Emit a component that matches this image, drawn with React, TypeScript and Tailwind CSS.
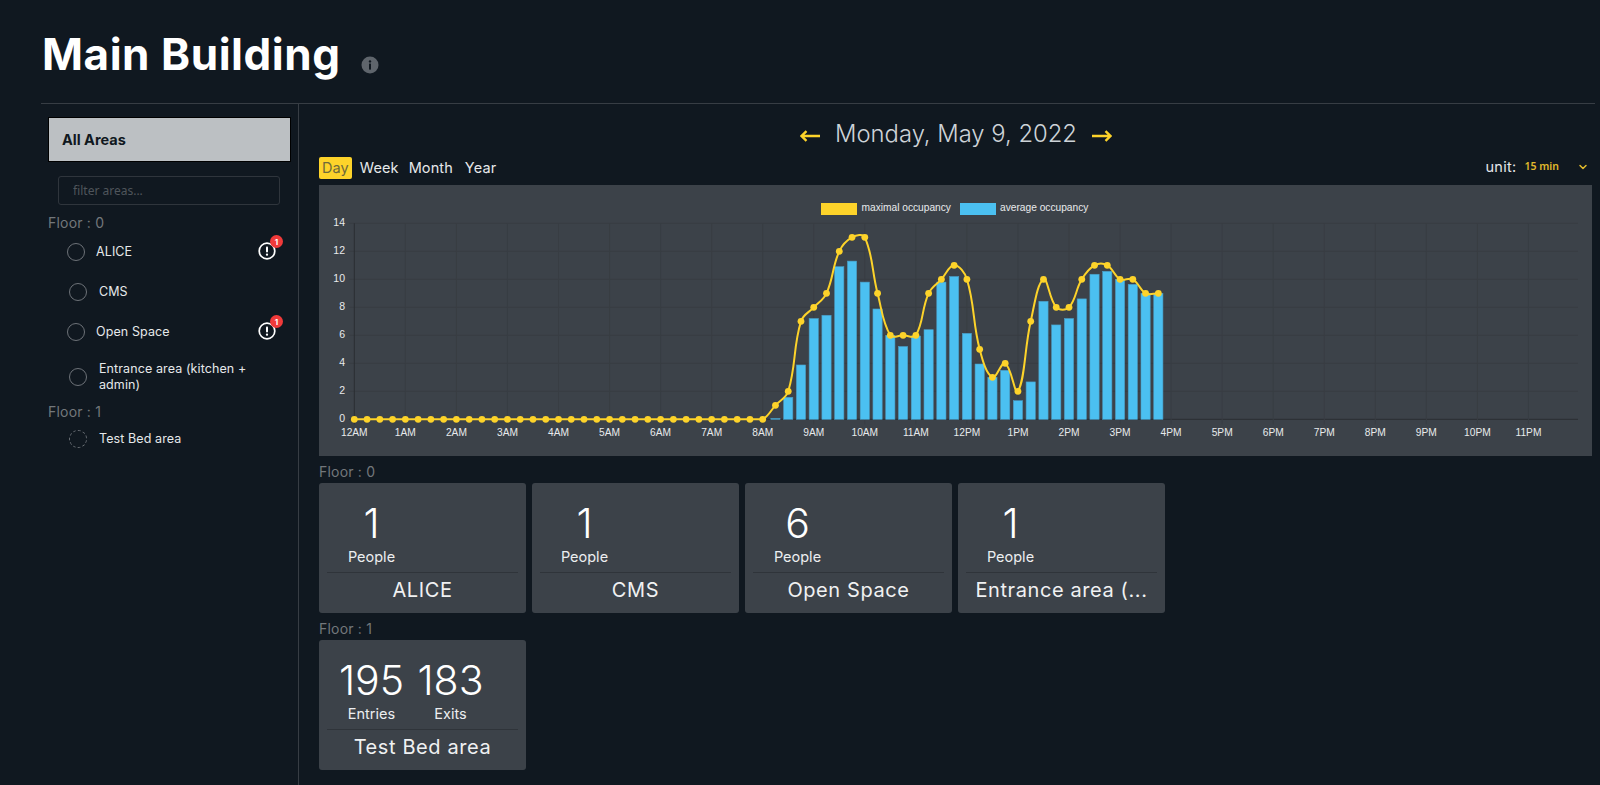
import { ChevronDown } from "lucide-react";

const font = "font-['Inter','Liberation_Sans',sans-serif]";

const maxOccupancy = [
  ...Array(33).fill(0),
  1, 2, 7, 8, 9, 12, 13, 13, 9, 6, 6, 6, 9, 10, 11, 10, 5, 3, 4, 2, 7, 10, 8, 8, 10, 11, 11, 10, 10, 9, 9,
];

const avgOccupancy = [
  ...Array(33).fill(0),
  0.06, 1.57, 3.88, 7.2, 7.43, 10.9, 11.3, 9.8, 7.88, 6, 5.2, 5.95, 6.4, 9.8, 10.2, 6.14, 3.95, 3, 3.5, 1.33, 2.67,
  8.43, 6.74, 7.2, 8.6, 10.36, 10.57, 10, 9.64, 9, 9,
];

const hours = [
  "12AM", "1AM", "2AM", "3AM", "4AM", "5AM", "6AM", "7AM", "8AM", "9AM", "10AM", "11AM",
  "12PM", "1PM", "2PM", "3PM", "4PM", "5PM", "6PM", "7PM", "8PM", "9PM", "10PM", "11PM",
];

// chart coordinates are relative to the chart panel
const x0 = 35.3;
const hourW = 51.05;
const yZero = 234.3;
const unit = 14;
const px = (i: number) => x0 + (i * hourW) / 4;
const py = (v: number) => yZero - v * unit;

function linePath(values: number[]) {
  const pts = values.map((v, i) => ({ x: px(i), y: py(v) }));
  const t = 0.4;
  const cps = pts.map((p, i) => {
    const a = pts[i - 1] ?? p;
    const b = pts[i + 1] ?? p;
    const d1 = Math.hypot(p.x - a.x, p.y - a.y);
    const d2 = Math.hypot(b.x - p.x, b.y - p.y);
    const sum = d1 + d2 || 1;
    return {
      px: p.x - (t * d1 * (b.x - a.x)) / sum,
      py: Math.min(yZero, p.y - (t * d1 * (b.y - a.y)) / sum),
      nx: p.x + (t * d2 * (b.x - a.x)) / sum,
      ny: Math.min(yZero, p.y + (t * d2 * (b.y - a.y)) / sum),
    };
  });
  let d = `M${pts[0].x} ${pts[0].y}`;
  for (let i = 1; i < pts.length; i++) {
    d += ` C${cps[i - 1].nx} ${cps[i - 1].ny} ${cps[i].px} ${cps[i].py} ${pts[i].x} ${pts[i].y}`;
  }
  return d;
}

function OccupancyChart() {
  return (
    <svg width="1273" height="271" className="block" fontFamily="'Liberation Sans', sans-serif">
      {[0, 2, 4, 6, 8, 10, 12, 14].map((v) => (
        <g key={v}>
          <line x1={x0 - 5} x2={1259} y1={py(v)} y2={py(v)} stroke={v === 0 ? "#2a2e33" : "#383d43"} />
          <text x={26} y={py(v) + 3} textAnchor="end" fontSize="10.5" fill="#e8eaec">
            {v}
          </text>
        </g>
      ))}
      {hours.map((label, i) => (
        <g key={label}>
          <line
            x1={x0 + i * hourW}
            x2={x0 + i * hourW}
            y1={py(14)}
            y2={yZero + 5}
            stroke={i === 0 ? "#2a2e33" : "#383d43"}
          />
          <text x={x0 + i * hourW} y={251} textAnchor="middle" fontSize="10.2" fill="#e8eaec">
            {label}
          </text>
        </g>
      ))}
      <rect x="502" y="18" width="36" height="12" fill="#fdd32a" />
      <text x="542.5" y="26" fontSize="10.2" fill="#e8eaec">
        maximal occupancy
      </text>
      <rect x="641" y="18" width="36" height="12" fill="#4bc0f1" />
      <text x="681" y="26" fontSize="10.2" fill="#e8eaec">
        average occupancy
      </text>
      {avgOccupancy.map((v, i) =>
        v > 0 ? (
          <rect
            key={i}
            x={px(i) - 4.6}
            y={py(v)}
            width="9.2"
            height={v * unit}
            fill="#4bc0f1"
            stroke="#4a9cc4"
            strokeWidth="0.6"
          />
        ) : null,
      )}
      <path d={linePath(maxOccupancy)} fill="none" stroke="#fdd32a" strokeWidth="2" />
      {maxOccupancy.map((v, i) => (
        <circle key={i} cx={px(i)} cy={py(v)} r="3.4" fill="#fdd32a" />
      ))}
    </svg>
  );
}

function AlertIcon() {
  return (
    <span className="relative -mt-[2px] block h-[18px] w-[18px]">
      <svg viewBox="0 0 18 18" className="block h-[18px] w-[18px]">
        <circle cx="9" cy="9" r="7.8" fill="none" stroke="#fff" strokeWidth="1.7" />
        <rect x="8" y="4.4" width="2" height="6" rx="0.8" fill="#fff" />
        <circle cx="9" cy="12.7" r="1.15" fill="#fff" />
      </svg>
      <span className="absolute -right-[7px] -top-[7px] flex h-[13px] w-[13px] items-center justify-center rounded-full bg-[#f03a3a] text-[8px] font-bold leading-none text-white">
        1
      </span>
    </span>
  );
}

function AreaRow({
  name,
  alert,
  dashed,
  shift,
  className,
}: {
  name: string;
  alert?: boolean;
  dashed?: boolean;
  shift?: boolean;
  className?: string;
}) {
  return (
    <div className={`flex items-center pr-[15px] ${shift ? "pl-[21px]" : "pl-[19px]"} ${className ?? ""}`}>
      <span
        className={`h-[18px] w-[18px] shrink-0 rounded-full border-[1.5px] border-[#6d7278] ${dashed ? "border-dashed" : ""}`}
      />
      <span
        className={`min-w-0 flex-1 text-[12.5px] leading-[16px] tracking-[0.1px] text-[#e6e8ea] ${shift ? "ml-[12px] pr-[24px]" : "ml-[11px]"}`}
      >
        {name}
      </span>
      {alert && <AlertIcon />}
    </div>
  );
}

function StatCard({ stats, name }: { stats: { value: string; label: string }[]; name: string }) {
  return (
    <div className="flex h-[130px] w-[207px] flex-col rounded-[3px] bg-[#3c4249] px-2">
      <div className="flex h-[90px] items-start border-b border-[#2f343a] pl-[5px] pt-[15px]">
        {stats.map((s) => (
          <div key={s.label} className="flex w-[79px] flex-col items-center text-white">
            <span className="text-[41px] font-light leading-[50px]">{s.value}</span>
            <span className="-mt-[1px] text-[14.5px] leading-[20px] text-[#eceef0]">{s.label}</span>
          </div>
        ))}
      </div>
      <div className="pt-[4px] text-center text-[20px] leading-[26px] tracking-[0.6px] text-[#f0f1f2]">{name}</div>
    </div>
  );
}

function FloorLabel({ children, className }: { children: string; className?: string }) {
  return <div className={`text-[14px] leading-[18px] tracking-[0.2px] text-[#73777b] ${className ?? ""}`}>{children}</div>;
}

function DateArrow({ flip }: { flip?: boolean }) {
  return (
    <svg viewBox="0 0 20 12" className={`mt-[4px] h-[12px] w-[20px] ${flip ? "rotate-180" : ""}`}>
      <path d="M1.5 6H20M6.5 1.2 1.5 6l5 4.8" fill="none" stroke="#fdd32a" strokeWidth="2.4" />
    </svg>
  );
}

export default function App() {
  return (
    <div className={`${font} h-[785px] overflow-hidden bg-[#101820] pl-[41px] pr-[5px]`}>
      <header className="flex h-[104px] items-start border-b border-[#373d44] pl-[1px] pt-[26px]">
        <h1 className="text-[44px] font-bold leading-[56px] tracking-[0.55px] text-white">Main Building</h1>
        <svg viewBox="0 0 18 18" className="ml-[20px] mt-[30px] h-[18px] w-[18px]">
          <circle cx="9" cy="9" r="8.5" fill="#5f656c" />
          <circle cx="9" cy="5.4" r="1.2" fill="#101820" />
          <rect x="8" y="7.6" width="2" height="6" fill="#101820" />
        </svg>
      </header>

      <div className="flex h-[681px]">
        <aside className="w-[258px] shrink-0 border-r border-[#373d44] pl-[7px] pr-[7px] pt-[13px]">
          <div className="flex h-[45px] items-center border border-black bg-[#bcc0c3] pl-[13px] text-[14.5px] font-bold text-[#101820]">
            All Areas
          </div>
          <input
            placeholder="filter areas..."
            className="ml-[10px] mt-[14px] block h-[29px] w-[222px] rounded-[3px] border border-[#2f353c] bg-transparent pl-[14px] font-['Noto_Sans',sans-serif] text-[12px] placeholder:text-[#4f555b]"
          />
          <FloorLabel className="mt-[9px]">Floor : 0</FloorLabel>
          <AreaRow name="ALICE" alert className="mt-[10px] h-[20px]" />
          <AreaRow name="CMS" shift className="mt-[20px] h-[20px]" />
          <AreaRow name="Open Space" alert className="mt-[20px] h-[20px]" />
          <AreaRow name="Entrance area (kitchen + admin)" shift className="mt-[19px] h-[32px]" />
          <FloorLabel className="mt-[10px]">Floor : 1</FloorLabel>
          <AreaRow name="Test Bed area" dashed shift className="mt-[8px] h-[20px]" />
        </aside>

        <main className="min-w-0 flex-1 pl-[20px] pr-[3px]">
          <div className="flex h-[53px] items-center justify-center gap-[15px] pl-[1px] pt-[7px]">
            <DateArrow />
            <span className="text-[23.8px] font-light text-[#cdd3d8]">Monday, May 9, 2022</span>
            <DateArrow flip />
          </div>
          <div className="flex h-[28px] items-start justify-between">
            <div className="flex items-center text-[14.5px] leading-[22px] tracking-[0.1px] text-[#e6e8ea]">
              <span className="rounded-[2px] bg-[#fdd32a] px-[3px] text-[#6f6a3a]">Day</span>
              <span className="ml-[8px]">Week</span>
              <span className="ml-[10px]">Month</span>
              <span className="ml-[12px]">Year</span>
            </div>
            <div className="flex h-[20px] items-center">
              <span className="text-[14.5px] tracking-[0.3px] text-[#e6e8ea]">unit:</span>
              <span className="ml-[8px] font-['Noto_Sans',sans-serif] text-[10.5px] font-semibold text-[#e0b92c]">
                15 min
              </span>
              <ChevronDown size={12} strokeWidth={3} className="ml-[18px] mr-[3px] text-[#e0b92c]" />
            </div>
          </div>
          <div className="bg-[#3c4249]">
            <OccupancyChart />
          </div>
          <FloorLabel className="mt-[7px]">Floor : 0</FloorLabel>
          <div className="mt-[2px] flex gap-[6px]">
            <StatCard name="ALICE" stats={[{ value: "1", label: "People" }]} />
            <StatCard name="CMS" stats={[{ value: "1", label: "People" }]} />
            <StatCard name="Open Space" stats={[{ value: "6", label: "People" }]} />
            <StatCard name="Entrance area (..." stats={[{ value: "1", label: "People" }]} />
          </div>
          <FloorLabel className="mt-[7px]">Floor : 1</FloorLabel>
          <div className="mt-[2px] flex gap-[6px]">
            <StatCard
              name="Test Bed area"
              stats={[
                { value: "195", label: "Entries" },
                { value: "183", label: "Exits" },
              ]}
            />
          </div>
        </main>
      </div>
    </div>
  );
}
